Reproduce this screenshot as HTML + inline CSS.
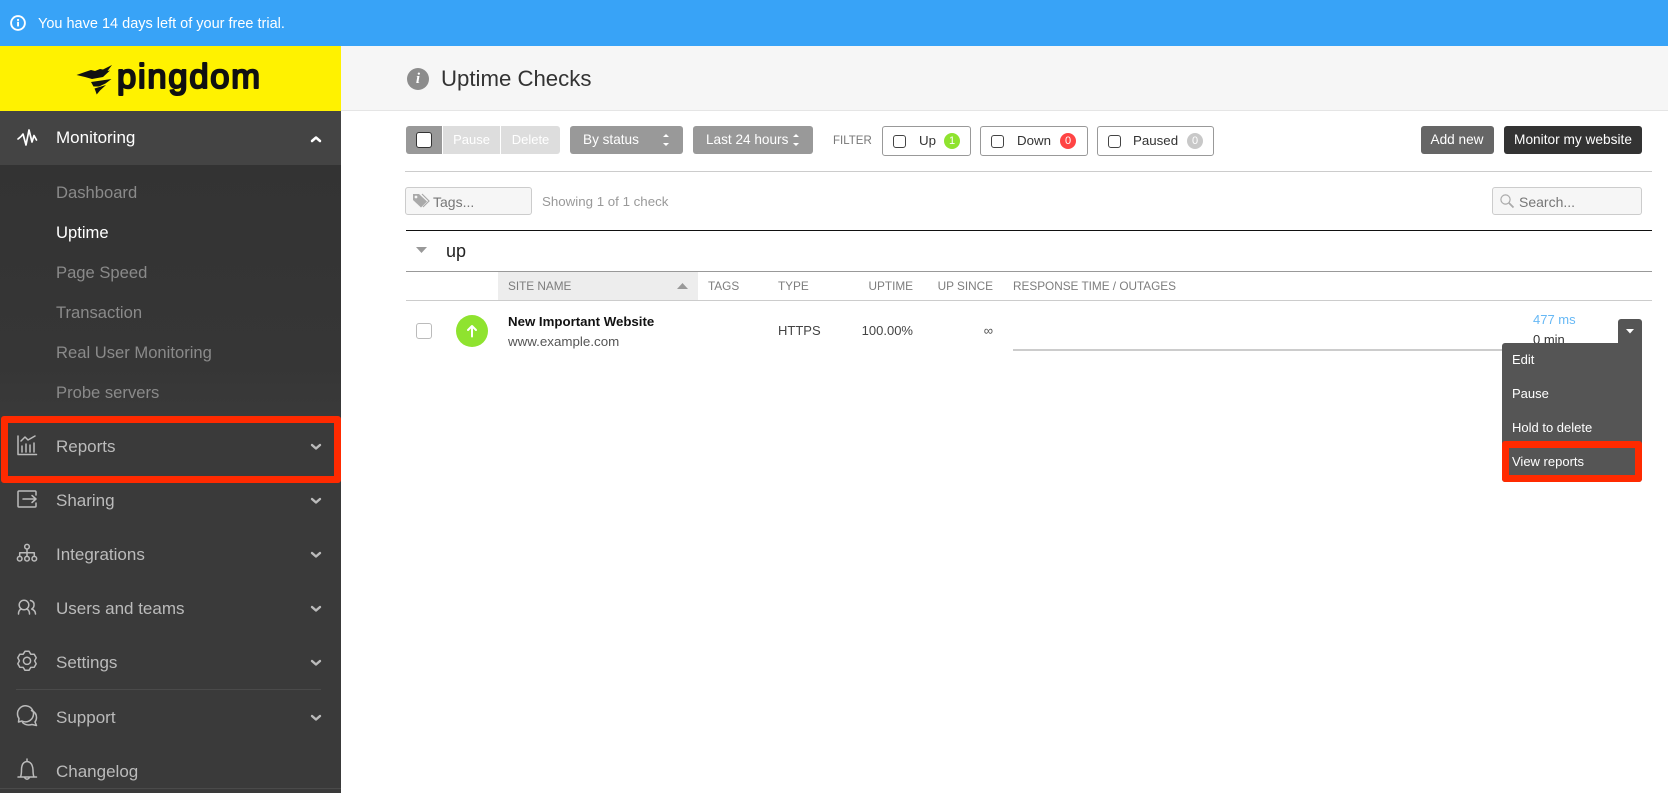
<!DOCTYPE html>
<html><head><meta charset="utf-8"><style>
html,body{margin:0;padding:0;width:1668px;height:793px;overflow:hidden;background:#fff;font-family:"Liberation Sans",Arial,sans-serif;color:#333}
.a{position:absolute;white-space:nowrap}
.t{position:absolute;white-space:nowrap;height:20px;line-height:20px}
.s{font-size:17px;color:#bbb;left:56px}
.sub{font-size:16.6px;color:#8a8a8a;left:56px}
.btn{position:absolute;top:126px;height:28px;line-height:27px;border-radius:3px;color:#fff;font-size:13.6px;text-align:center;box-sizing:border-box}
.f{position:absolute;top:126px;height:30px;border:1px solid #999;border-radius:3px;box-sizing:border-box;background:#fff}
.cb{position:absolute;width:13px;height:13px;border:1px solid #444;border-radius:3px;background:#fff;box-sizing:border-box}
.bd{position:absolute;top:133px;width:16px;height:16px;border-radius:8px;color:#fff;font-size:11px;line-height:16px;text-align:center}
.th{font-size:11.8px;letter-spacing:-.02px;color:#7d7d7d;top:276px}
.in{position:absolute;top:187px;height:28px;border:1px solid #ccc;border-radius:3px;box-sizing:border-box;background:#f6f6f6}
svg{position:absolute;overflow:visible}
</style></head><body>
<div class="a" style="left:0;top:0;width:1668px;height:46px;background:#38a3f7"></div>
<svg style="left:10px;top:14px" width="17" height="17" viewBox="0 0 17 17" fill="none"><circle cx="8" cy="9" r="6.9" stroke="#fff" stroke-width="1.9"/><rect x="7.1" y="7.8" width="1.9" height="4.6" fill="#fff"/><rect x="7.1" y="5" width="1.9" height="1.9" fill="#fff"/></svg>
<div class="t" style="left:38px;top:14px;font-size:14.5px;color:#fff">You have 14 days left of your free trial.</div>

<!-- sidebar -->
<div class="a" style="left:0;top:46px;width:341px;height:65px;background:#fff200"></div>
<svg style="left:0;top:46px" width="341" height="65" viewBox="0 46 341 65">
<path d="M76.5 75 L85 72 L91 70 L95 71 L100 69 L103 69.5 L112 65 L107.5 71 L110 70.5 L103 77 L92 79 L85 77 Z" fill="#111"/>
<path d="M91 82 L111.5 79 L105.5 83.5 L99 86.5 L93.5 86.5 Z" fill="#111"/>
<path d="M94.5 88.5 L106 85 L100 90.5 L96.7 94.5 L95.5 91 Z" fill="#111"/>
<text x="117" y="88" font-family="'Liberation Sans',sans-serif" font-size="34.5" textLength="143" lengthAdjust="spacing" fill="#111" stroke="#111" stroke-width="2.1" stroke-linejoin="round">pingdom</text>
</svg>
<div class="a" style="left:0;top:111px;width:341px;height:54px;background:#444"></div>
<div class="a" style="left:0;top:165px;width:341px;height:628px;background:linear-gradient(#333 0,#363636 200px,#3a3a3a 255px)"></div>
<div class="a" style="left:16px;top:689px;width:305px;height:1px;background:#4a4a4a"></div>
<div class="a" style="left:0;top:788px;width:341px;height:1px;background:#4a4a4a"></div>

<div class="t s" style="top:128px;color:#fff">Monitoring</div>
<div class="t sub" style="top:183px">Dashboard</div>
<div class="t sub" style="top:223px;color:#fff">Uptime</div>
<div class="t sub" style="top:263px">Page Speed</div>
<div class="t sub" style="top:303px">Transaction</div>
<div class="t sub" style="top:343px">Real User Monitoring</div>
<div class="t sub" style="top:383px">Probe servers</div>
<div class="t s" style="top:437px">Reports</div>
<div class="t s" style="top:491px">Sharing</div>
<div class="t s" style="top:545px">Integrations</div>
<div class="t s" style="top:599px">Users and teams</div>
<div class="t s" style="top:653px">Settings</div>
<div class="t s" style="top:708px">Support</div>
<div class="t s" style="top:762px">Changelog</div>

<svg style="left:0;top:0" width="341" height="793" fill="none" stroke="#bbb" stroke-width="1.5" stroke-linecap="round" stroke-linejoin="round">
<!-- monitoring -->
<path d="M18 139 L21 136.5 L23 134 L26 145 L29 130 L32 142 L34 135.5 L36.5 140" stroke="#fff" stroke-width="1.7"/>
<!-- chevrons -->
<path d="M312 141 L316 137.5 L320 141" stroke="#fff" stroke-width="2.5"/>
<path d="M312 445 L316 448.5 L320 445" stroke-width="2.4"/>
<path d="M312 499 L316 502.5 L320 499" stroke-width="2.4"/>
<path d="M312 553 L316 556.5 L320 553" stroke-width="2.4"/>
<path d="M312 607 L316 610.5 L320 607" stroke-width="2.4"/>
<path d="M312 661 L316 664.5 L320 661" stroke-width="2.4"/>
<path d="M312 716 L316 719.5 L320 716" stroke-width="2.4"/>
<!-- reports -->
<path d="M18 436 V454.5 H36.5 M22 452 V446 M26 452 V444 M30 452 V445 M34 452 V443 M21 441 L25 437 L28 440 L35 436"/>
<!-- sharing -->
<path d="M36 495 V492 Q36 491 35 491 H19 Q18 491 18 492 V506 Q18 507 19 507 H35 Q36 507 36 506 V503 M23 499 H36 M32 495.5 L36 499 L32 502.5"/>
<!-- integrations -->
<circle cx="27" cy="546.7" r="2.3"/><circle cx="19.7" cy="558.7" r="2.3"/><circle cx="27" cy="558.7" r="2.3"/><circle cx="34.3" cy="558.7" r="2.3"/>
<path d="M27 549 V556.4 M19.7 556.4 V552.7 H34.3 V556.4"/>
<!-- users -->
<circle cx="24" cy="605" r="4.8"/><path d="M18.5 614 Q18.5 609.8 21.5 609 M29.5 614 Q29.5 609.8 26.5 609 M30.5 600.5 Q34.5 601.5 34 605.5 Q33.7 608 31.7 609 Q35.5 610.5 35.5 614"/>
<!-- settings -->
<path transform="translate(0,-.7)" d="M29 652 L25 652 L23.2 654.9 L19.8 655 L17.8 658.5 L19.4 661.5 L17.8 664.5 L19.8 668 L23.2 668.1 L25 671 L29 671 L30.8 668.1 L34.2 668 L36.2 664.5 L34.6 661.5 L36.2 658.5 L34.2 655 L30.8 654.9 Z"/>
<circle cx="27" cy="660.8" r="3.6"/>
<!-- support -->
<path d="M17.5 714 A8 8 0 1 1 22 721 L18.5 722 L19 718.5 Q17.5 716.5 17.5 714 Z"/>
<path d="M31.5 710.5 Q36.5 712.5 36.5 717.5 Q36.5 720 35 722 L36.5 725.5 L32 724.5 Q26 726 22.5 722.5"/>
<!-- changelog -->
<path d="M18 777 H36.5 M20.5 777 Q21.5 774.5 21.5 770 Q21.5 762 27 761.5 Q32.5 762 33 770 Q33 774.5 34 777 M27 761.5 V759 M24.5 777.5 Q27 781 29.5 777.5"/>
</svg>

<!-- red box sidebar -->
<div class="a" style="left:1px;top:416px;width:340px;height:67px;box-sizing:border-box;border:7px solid #ff2a00;border-radius:3px"></div>

<!-- header -->
<div class="a" style="left:341px;top:46px;width:1327px;height:64px;background:#f6f6f6;border-bottom:1px solid #e5e5e5"></div>
<div class="a" style="left:407px;top:68px;width:22px;height:22px;border-radius:11px;background:#8c8c8c;color:#fff;font:italic bold 15px/22px 'Liberation Serif',serif;text-align:center">i</div>
<div class="t" style="left:441px;top:69px;font-size:22.2px;color:#333;line-height:20px">Uptime Checks</div>

<!-- toolbar -->
<div class="btn" style="left:406px;width:36px;background:#999;border-radius:3px 0 0 3px"></div>
<div class="cb" style="left:416px;top:132px;width:16px;height:16px;background:#fff;border:1.5px solid #333"></div>
<div class="btn" style="left:443px;width:57px;background:#ddd;border-radius:0;font-size:13px">Pause</div>
<div class="btn" style="left:501px;width:59px;background:#ddd;border-radius:0 3px 3px 0;font-size:13px">Delete</div>
<div class="btn" style="left:570px;width:113px;background:#999;text-align:left;padding-left:13px">By status</div>
<div class="btn" style="left:693px;width:120px;background:#999;text-align:left;padding-left:13px">Last 24 hours</div>
<svg style="left:0;top:0" width="1" height="1" fill="#fff"><path d="M663 137 L666 134 L669 137Z M663 143 L666 146 L669 143Z M793 137 L796 134 L799 137Z M793 143 L796 146 L799 143Z"/></svg>
<div class="t" style="left:833px;top:131px;font-size:11.5px;color:#777">FILTER</div>
<div class="f" style="left:882px;width:89px"></div>
<div class="f" style="left:980px;width:108px"></div>
<div class="f" style="left:1097px;width:117px"></div>
<div class="cb" style="left:893px;top:135px"></div>
<div class="cb" style="left:991px;top:135px"></div>
<div class="cb" style="left:1108px;top:135px"></div>
<div class="t" style="left:919px;top:131px;font-size:13.3px">Up</div>
<div class="t" style="left:1017px;top:131px;font-size:13.3px">Down</div>
<div class="t" style="left:1133px;top:131px;font-size:13.3px">Paused</div>
<div class="bd" style="left:944px;background:#8fe32f">1</div>
<div class="bd" style="left:1060px;background:#ff4444">0</div>
<div class="bd" style="left:1187px;background:#c8c8c8">0</div>
<div class="btn" style="left:1421px;width:73px;background:#666;padding-right:1px">Add new</div>
<div class="btn" style="left:1504px;width:138px;background:#333;font-size:13.7px">Monitor my website</div>
<div class="a" style="left:405px;top:171px;width:1247px;height:1px;background:#ccc"></div>

<div class="in" style="left:405px;width:127px"></div>
<svg style="left:412px;top:193px" width="18" height="16" viewBox="0 0 18 16"><path d="M1 1 H7 L15 8.5 L9 14.5 L1 7 Z" fill="#aaa"/><path d="M10 1 L17 8 L11 14" fill="none" stroke="#aaa" stroke-width="1.2"/><circle cx="4" cy="4" r="1.4" fill="#f6f6f6"/></svg>
<div class="t" style="left:433px;top:192px;font-size:14px;color:#777">Tags...</div>
<div class="t" style="left:542px;top:192px;font-size:13.3px;color:#999">Showing 1 of 1 check</div>
<div class="in" style="left:1492px;width:150px"></div>
<svg style="left:1500px;top:194px" width="15" height="15" fill="none" stroke="#aaa" stroke-width="1.2"><circle cx="5.5" cy="5.5" r="4.6"/><path d="M9 9 L13.5 13.5" stroke-width="1.8"/></svg>
<div class="t" style="left:1519px;top:192px;font-size:14px;color:#777">Search...</div>
<div class="a" style="left:406px;top:230px;width:1246px;height:1px;background:#111"></div>

<!-- group -->
<svg style="left:416px;top:247px" width="12" height="7"><path d="M0 0 H11 L5.5 6Z" fill="#999"/></svg>
<div class="t" style="left:446px;top:241px;font-size:18px;color:#222">up</div>
<div class="a" style="left:406px;top:271px;width:1246px;height:1px;background:#999"></div>
<div class="a" style="left:498px;top:272px;width:200px;height:28px;background:#ededed"></div>
<div class="a" style="left:406px;top:300px;width:1246px;height:1px;background:#ccc"></div>
<div class="t th" style="left:508px">SITE NAME</div>
<svg style="left:677px;top:283px" width="11" height="6"><path d="M0 6 H11 L5.5 0Z" fill="#999"/></svg>
<div class="t th" style="left:708px">TAGS</div>
<div class="t th" style="left:778px">TYPE</div>
<div class="t th" style="right:755px">UPTIME</div>
<div class="t th" style="right:675px">UP SINCE</div>
<div class="t th" style="left:1013px">RESPONSE TIME / OUTAGES</div>

<!-- row -->
<div class="a" style="left:416px;top:323px;width:16px;height:16px;box-sizing:border-box;border:1px solid #bbb;border-radius:3px"></div>
<div class="a" style="left:456px;top:315px;width:32px;height:32px;border-radius:16px;background:#8fe32f"></div>
<svg style="left:456px;top:315px" width="32" height="32" fill="none" stroke="#fff" stroke-width="2" stroke-linecap="round" stroke-linejoin="round"><path d="M16 21.5 V11 M12 15 L16 11 L20 15"/></svg>
<div class="t" style="left:508px;top:312px;font-size:13.25px;font-weight:700;color:#111">New Important Website</div>
<div class="t" style="left:508px;top:332px;font-size:13.35px;color:#555">www.example.com</div>
<div class="t" style="left:778px;top:321px;font-size:13px;color:#444">HTTPS</div>
<div class="t" style="right:755px;top:321px;font-size:13px;color:#444">100.00%</div>
<div class="t" style="right:675px;top:321px;font-size:13px;color:#555">∞</div>
<div class="a" style="left:1013px;top:349px;width:489px;height:2px;background:#ccc"></div>
<div class="t" style="left:1533px;top:310px;font-size:13px;color:#66b8f5">477 ms</div>
<div class="t" style="left:1533px;top:330px;font-size:13px;color:#333">0 min</div>

<!-- menu -->
<div class="a" style="left:1618px;top:319px;width:24px;height:26px;background:#555;border-radius:3px 3px 0 0"></div>
<svg style="left:1626px;top:329px" width="8" height="5"><path d="M0 0 H8 L4 4.5Z" fill="#fff"/></svg>
<div class="a" style="left:1502px;top:343px;width:140px;height:139px;background:#555;border-radius:3px 0 3px 3px"></div>
<div class="t" style="left:1512px;top:350px;font-size:13px;color:#fff">Edit</div>
<div class="t" style="left:1512px;top:384px;font-size:13px;color:#fff">Pause</div>
<div class="t" style="left:1512px;top:418px;font-size:13px;color:#fff">Hold to delete</div>
<div class="t" style="left:1512px;top:452px;font-size:13px;color:#fff">View reports</div>
<div class="a" style="left:1502px;top:441px;width:140px;height:41px;box-sizing:border-box;border:7px solid #ff2a00;border-radius:3px"></div>
</body></html>
